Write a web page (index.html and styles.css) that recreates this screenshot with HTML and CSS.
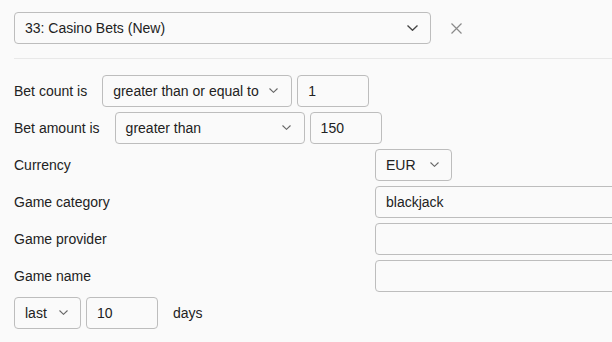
FILE: index.html
```html
<!DOCTYPE html>
<html>
<head>
<meta charset="utf-8">
<link rel="stylesheet" href="styles.css">
</head>
<body>
<div class="header">
  <div class="ctl select select-main">
    <span class="val">33: Casino Bets (New)</span>
    <svg class="chev chev-main" width="11" height="6" viewBox="0 0 11 6"><path d="M0.5 0.5 L5.5 5.3 L10.5 0.5" fill="none" stroke="#444" stroke-width="1.3"/></svg>
  </div>
  <svg class="close" width="11" height="11" viewBox="0 0 11 11"><path d="M0.5 0.5 L10.5 10.5 M10.5 0.5 L0.5 10.5" fill="none" stroke="#8a8a8a" stroke-width="1.2"/></svg>
</div>
<div class="divider"></div>
<div class="rows">
  <div class="row">
    <span class="label">Bet count is</span>
    <div class="ctl select w190">
      <span class="val">greater than or equal to</span>
      <svg class="chev" width="9" height="5" viewBox="0 0 9 5"><path d="M0.5 0.5 L4.5 4.3 L8.5 0.5" fill="none" stroke="#666" stroke-width="1.1"/></svg>
    </div>
    <div class="ctl input w72"><span class="val">1</span></div>
  </div>
  <div class="row">
    <span class="label">Bet amount is</span>
    <div class="ctl select w190">
      <span class="val">greater than</span>
      <svg class="chev" width="9" height="5" viewBox="0 0 9 5"><path d="M0.5 0.5 L4.5 4.3 L8.5 0.5" fill="none" stroke="#666" stroke-width="1.1"/></svg>
    </div>
    <div class="ctl input w72"><span class="val">150</span></div>
  </div>
  <div class="grow">
    <span class="label">Currency</span>
    <div class="ctl select w77">
      <span class="val">EUR</span>
      <svg class="chev chev-sm" width="9" height="5" viewBox="0 0 9 5"><path d="M0.5 0.5 L4.5 4.3 L8.5 0.5" fill="none" stroke="#666" stroke-width="1.1"/></svg>
    </div>
  </div>
  <div class="grow">
    <span class="label">Game category</span>
    <div class="ctl input wide"><span class="val">blackjack</span></div>
  </div>
  <div class="grow">
    <span class="label">Game provider</span>
    <div class="ctl input wide"></div>
  </div>
  <div class="grow">
    <span class="label">Game name</span>
    <div class="ctl input wide"></div>
  </div>
  <div class="row row-last">
    <div class="ctl select w67">
      <span class="val">last</span>
      <svg class="chev chev-sm" width="9" height="5" viewBox="0 0 9 5"><path d="M0.5 0.5 L4.5 4.3 L8.5 0.5" fill="none" stroke="#666" stroke-width="1.1"/></svg>
    </div>
    <div class="ctl input w72"><span class="val">10</span></div>
    <span class="days">days</span>
  </div>
</div>
</body>
</html>
```
FILE: styles.css
```css
html, body {
  margin: 0;
  overflow: hidden;
  background: #fafafa;
}
body {
  padding: 12px 0 0 14px;
  font-family: "Liberation Sans", Arial, sans-serif;
  font-size: 14px;
  color: #222;
}
.header {
  display: flex;
  align-items: center;
}
.ctl {
  box-sizing: border-box;
  height: 32px;
  border: 1px solid #bdbdbd;
  border-radius: 4px;
  background: #fafafa;
  display: flex;
  align-items: center;
  padding: 0 10px;
  flex-shrink: 0;
  white-space: nowrap;
}
.select .chev {
  margin-left: auto;
  margin-right: 3px;
  margin-top: -1px;
}
.select .chev-sm {
  margin-right: 2px;
}
.select-main {
  width: 417px;
}
.select-main .chev-main {
  margin-right: 2px;
}
.close {
  margin-left: 20px;
}
.divider {
  border-top: 1px solid #e8e8e8;
  margin: 14px 0 16px;
}
.rows {
  display: flex;
  flex-direction: column;
  gap: 5px;
}
.row {
  display: flex;
  align-items: center;
  gap: 5px;
}
.row .label {
  margin-right: 10px;
}
.grow {
  display: grid;
  grid-template-columns: 361px 1fr;
  align-items: center;
  overflow: hidden;
}
.w190 { width: 190px; }
.w72 { width: 72px; }
.w77 { width: 77px; }
.w67 { width: 67px; }
.wide {
  width: calc(100% + 8px);
}
.days {
  margin-left: 10px;
}
```
